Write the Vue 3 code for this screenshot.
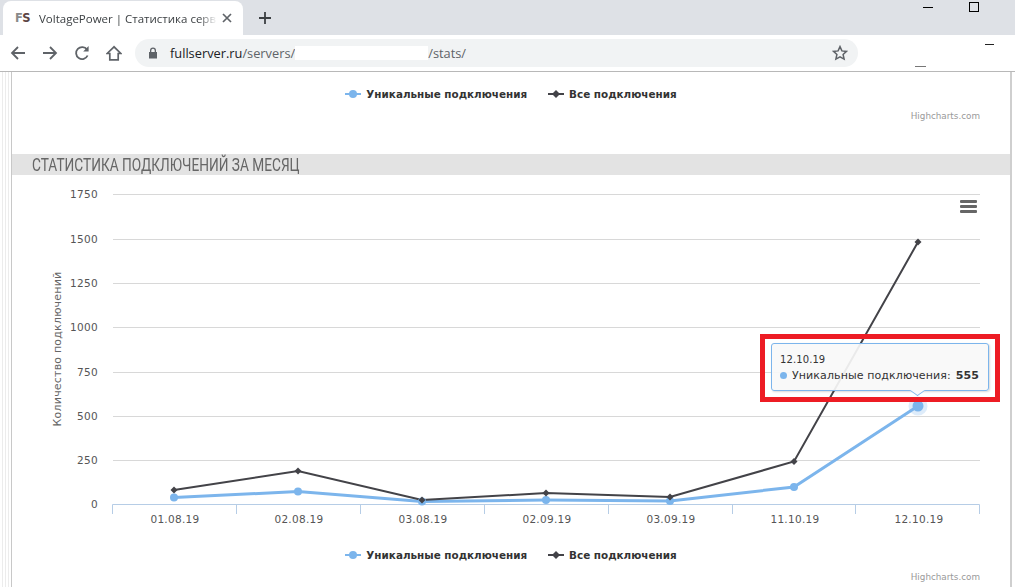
<script setup>
const gridLines = [
  { y: 19.5, label: '1750' },
  { y: 64.5, label: '1500' },
  { y: 108.5, label: '1250' },
  { y: 152.5, label: '1000' },
  { y: 197.5, label: '750' },
  { y: 241.5, label: '500' },
  { y: 285.5, label: '250' },
  { y: 329.5, label: '0' },
]

const categories = ['01.08.19', '02.08.19', '03.08.19', '02.09.19', '03.09.19', '11.10.19', '12.10.19']
const ticks = [100.5, 224.5, 348.5, 472.5, 596.5, 720.5, 843.5, 967.5]
const centers = [162, 286, 410, 534, 658, 782, 906]

const uniqueY = [322.5, 316.5, 326.5, 325, 326, 312, 231]
const allY = [315, 296, 325, 318, 322, 286.5, 67]

const toPoints = (ys) => ys.map((y, i) => `${centers[i]},${y}`).join(' ')
const diamond = (x, y) => `${x},${y - 3.5} ${x + 3.5},${y} ${x},${y + 3.5} ${x - 3.5},${y}`
</script>

<template>
  <div class="window">
    <div class="tabstrip">
      <div class="tab">
        <span class="favicon"><i>F</i>S</span>
        <span class="tab-title">VoltagePower | Статистика серв</span>
        <svg class="tab-close" width="10" height="10" viewBox="0 0 10 10">
          <path d="M1 1l8 8M9 1l-8 8" stroke="#5f6368" stroke-width="1.7" />
        </svg>
      </div>
      <svg class="new-tab" width="14" height="14" viewBox="0 0 14 14">
        <path d="M7 1v12M1 7h12" stroke="#3c4043" stroke-width="1.8" />
      </svg>
      <div class="win-controls">
        <span class="win-min"></span>
        <span class="win-max"></span>
      </div>
    </div>

    <div class="toolbar">
      <svg class="nav" width="16" height="16" viewBox="0 0 16 16">
        <path d="M15 8H2M8 2L2 8l6 6" fill="none" stroke="#5f6368" stroke-width="1.8" />
      </svg>
      <svg class="nav" width="16" height="16" viewBox="0 0 16 16">
        <path d="M1 8h13M8 2l6 6-6 6" fill="none" stroke="#5f6368" stroke-width="1.8" />
      </svg>
      <svg class="nav" width="16" height="16" viewBox="0 0 16 16">
        <path d="M13.6 10.5A6 6 0 1 1 13 4.6" fill="none" stroke="#5f6368" stroke-width="1.8" />
        <path d="M14.6 1v5.4H9.2z" fill="#5f6368" />
      </svg>
      <svg class="nav" width="16" height="16" viewBox="0 0 16 16">
        <path d="M8 1.8L1.2 8.5H3.8V14.8H12.2V8.5H14.8z" fill="none" stroke="#5f6368" stroke-width="1.7" />
      </svg>
      <div class="omnibox">
        <svg class="lock" width="10" height="12" viewBox="0 0 10 12">
          <path d="M2 5V3.5a3 3 0 0 1 6 0V5h1v6.5H1V5zm1.3 0h3.4V3.5a1.7 1.7 0 0 0-3.4 0z" fill="#5f6368" />
        </svg>
        <span class="url-host">fullserver.ru</span><span class="url-path">/servers/</span>
        <span class="url-mask"></span>
        <span class="url-path">/stats/</span>
        <svg class="star" width="16" height="16" viewBox="0 0 16 16">
          <path d="M8 1.6l1.9 4.3 4.6.5-3.4 3.1 1 4.6L8 11.8l-4.1 2.3 1-4.6L1.5 6.4l4.6-.5z" fill="none" stroke="#5f6368" stroke-width="1.5" />
        </svg>
      </div>
      <span class="glitch glitch-a"></span>
      <span class="glitch glitch-b"></span>
    </div>

    <div class="page">
      <div class="left-rail"></div>
      <main class="content">
        <section class="chart-tail">
          <div class="legend">
            <span class="legend-item">
              <svg width="16" height="10" viewBox="0 0 16 10">
                <path d="M0 5h16" stroke="#7cb5ec" stroke-width="2" />
                <circle cx="8" cy="5" r="4" fill="#7cb5ec" />
              </svg>
              Уникальные подключения
            </span>
            <span class="legend-item">
              <svg width="16" height="10" viewBox="0 0 16 10">
                <path d="M0 5h16" stroke="#434348" stroke-width="2" />
                <polygon points="8,1 12,5 8,9 4,5" fill="#434348" />
              </svg>
              Все подключения
            </span>
          </div>
          <div class="credits">Highcharts.com</div>
        </section>

        <h2 class="section-title"><span>СТАТИСТИКА ПОДКЛЮЧЕНИЙ ЗА МЕСЯЦ</span></h2>

        <section class="chart">
          <svg class="plot" width="998" height="352" viewBox="0 0 998 352">
            <g v-for="line in gridLines" :key="line.label">
              <line v-if="line.label !== '0'" x1="101" x2="968" :y1="line.y" :y2="line.y" stroke="#d8d8d8" />
              <text class="axis-label" x="86" :y="line.y + 3" text-anchor="end">{{ line.label }}</text>
            </g>

            <text class="axis-title" transform="translate(49 174) rotate(-90)" text-anchor="middle">Количество подключений</text>

            <line x1="100.5" x2="967.5" y1="329.5" y2="329.5" stroke="#b6cde6" />
            <line v-for="x in ticks" :key="x" :x1="x" :x2="x" y1="329.5" y2="339" stroke="#b6cde6" />
            <text v-for="(c, i) in categories" :key="c" class="axis-label" :x="centers[i] + 1" y="348" text-anchor="middle">{{ c }}</text>

            <polyline :points="toPoints(uniqueY)" fill="none" stroke="#7cb5ec" stroke-width="3" />
            <polyline :points="toPoints(allY)" fill="none" stroke="#434348" stroke-width="2" />

            <circle v-for="(y, i) in uniqueY" :key="'u' + i" :cx="centers[i]" :cy="y" r="4" fill="#7cb5ec" />
            <polygon v-for="(y, i) in allY" :key="'a' + i" :points="diamond(centers[i], y)" fill="#434348" />
            <circle cx="906" cy="231" r="9.5" fill="#7cb5ec" fill-opacity="0.25" />
            <circle cx="906" cy="231" r="5.5" fill="#7cb5ec" />

            <g fill="#666">
              <rect x="948" y="25" width="17" height="3" rx="1" />
              <rect x="948" y="30" width="17" height="3" rx="1" />
              <rect x="948" y="35" width="17" height="3" rx="1" />
            </g>
          </svg>

          <div class="tooltip">
            <div class="tooltip-date">12.10.19</div>
            <div class="tooltip-row">
              <span class="tooltip-dot"></span>
              <span>Уникальные подключения:</span>
              <b>555</b>
            </div>
            <span class="tooltip-arrow"></span>
          </div>
          <div class="highlight"></div>

          <div class="legend legend-bottom">
            <span class="legend-item">
              <svg width="16" height="10" viewBox="0 0 16 10">
                <path d="M0 5h16" stroke="#7cb5ec" stroke-width="2" />
                <circle cx="8" cy="5" r="4" fill="#7cb5ec" />
              </svg>
              Уникальные подключения
            </span>
            <span class="legend-item">
              <svg width="16" height="10" viewBox="0 0 16 10">
                <path d="M0 5h16" stroke="#434348" stroke-width="2" />
                <polygon points="8,1 12,5 8,9 4,5" fill="#434348" />
              </svg>
              Все подключения
            </span>
          </div>
          <div class="credits">Highcharts.com</div>
        </section>
      </main>
      <div class="right-rail"></div>
    </div>
  </div>
</template>

<style>
html, body {
  margin: 0;
  overflow: hidden;
  background: #fff;
}
</style>

<style scoped>
.window {
  width: 1015px;
  height: 587px;
  overflow: hidden;
  display: flex;
  flex-direction: column;
  font-family: "Open Sans", "Liberation Sans", sans-serif;
}

/* вкладки */
.tabstrip {
  height: 35px;
  flex: none;
  background: #dee1e6;
  display: flex;
  align-items: flex-end;
  position: relative;
}
.tab {
  width: 240px;
  height: 34px;
  margin-left: 3px;
  background: #fff;
  border-radius: 8px 8px 0 0;
  display: flex;
  align-items: center;
  box-sizing: border-box;
  padding-left: 12px;
}
.favicon {
  width: 24px;
  flex: none;
  font: bold 11.5px "DejaVu Sans", sans-serif;
  letter-spacing: -0.5px;
  color: #5c4444;
}
.favicon i {
  font-style: normal;
  color: #8a8a8a;
}
.tab-title {
  width: 178px;
  flex: none;
  white-space: nowrap;
  font-size: 11.5px;
  color: #3c4043;
  -webkit-mask-image: linear-gradient(to right, #000 90%, transparent);
  mask-image: linear-gradient(to right, #000 90%, transparent);
}
.tab-close {
  margin-left: 5px;
}
.new-tab {
  margin: 0 0 10px 15px;
}
.win-controls {
  position: absolute;
  top: 2px;
  left: 923px;
  display: flex;
  gap: 36px;
}
.win-min {
  width: 10px;
  height: 1px;
  margin-top: 5px;
  background: #000;
}
.win-max {
  width: 8px;
  height: 8px;
  border: 1px solid #000;
}

/* адресная строка */
.toolbar {
  height: 37px;
  flex: none;
  box-sizing: border-box;
  background: #fff;
  border-bottom: 1px solid #b8b8b8;
  display: flex;
  align-items: center;
  padding-left: 10px;
  gap: 16px;
  position: relative;
}
.nav {
  flex: none;
}
.omnibox {
  width: 723px;
  height: 28px;
  margin-left: -3px;
  background: #f1f3f4;
  border-radius: 14px;
  display: flex;
  align-items: center;
  box-sizing: border-box;
  padding-left: 13px;
  font-size: 12.8px;
  white-space: nowrap;
}
.lock {
  margin-right: 12px;
  flex: none;
}
.url-host {
  color: #202124;
}
.url-path {
  color: #5f6368;
}
.url-mask {
  width: 133px;
  height: 14px;
  background: #fff;
  flex: none;
}
.star {
  margin-left: auto;
  margin-right: 10px;
}
.glitch {
  position: absolute;
  height: 1px;
}
.glitch-a {
  left: 985px;
  top: 9px;
  width: 9px;
  background: #222;
}
.glitch-b {
  left: 915px;
  top: 31px;
  width: 11px;
  background: #777;
}

/* страница */
.page {
  flex: 1;
  display: flex;
  min-height: 0;
}
.left-rail {
  width: 11px;
  flex: none;
  border-right: 1px solid #c8c8c8;
  background: repeating-linear-gradient(to right, #fff 0 2px, #ececec 2px 3px);
}
.right-rail {
  flex: 1;
  border-left: 2px solid #cfcfcf;
  background: #fff;
}
.content {
  width: 998px;
  flex: none;
  display: flex;
  flex-direction: column;
}
.chart-tail {
  height: 82px;
  flex: none;
}
.legend {
  display: flex;
  justify-content: center;
  gap: 21px;
  padding-top: 15px;
  height: 14px;
  align-items: center;
  font: bold 10.4px "DejaVu Sans", sans-serif;
  color: #333;
}
.legend-item {
  display: flex;
  align-items: center;
  gap: 5px;
}
.credits {
  margin-top: 10px;
  padding-right: 30px;
  text-align: right;
  font: 8.8px "DejaVu Sans", sans-serif;
  color: #999;
}
.section-title {
  height: 21px;
  margin: 0;
  flex: none;
  background: #e3e3e3;
  padding-left: 20px;
  overflow: hidden;
  white-space: nowrap;
  font: 400 18px/21px Roboto, sans-serif;
  color: #666;
}
.section-title span {
  display: inline-block;
  transform: scaleX(0.76);
  transform-origin: left center;
}
.chart {
  position: relative;
  flex: 1;
}
.plot {
  display: block;
}
.axis-label {
  font: 10.5px "DejaVu Sans", sans-serif;
  fill: #555;
  letter-spacing: 0.3px;
}
.axis-title {
  font: 11px "DejaVu Sans", sans-serif;
  fill: #666;
  letter-spacing: 0.2px;
}
.legend-bottom {
  padding-top: 21px;
  margin-bottom: 1px;
}

/* подсказка */
.tooltip {
  position: absolute;
  left: 759px;
  top: 168px;
  width: 218px;
  height: 48px;
  box-sizing: border-box;
  background: rgba(249, 249, 249, 0.92);
  border: 1px solid #7cb5ec;
  border-radius: 3px;
  padding: 10px 0 0 8px;
  font: 11px "DejaVu Sans", sans-serif;
  color: #333;
  letter-spacing: 0.1px;
  box-shadow: 1px 1px 2px rgba(0, 0, 0, 0.15);
}
.tooltip-date {
  font-size: 10px;
  line-height: 12px;
}
.tooltip-row {
  display: flex;
  align-items: center;
  gap: 5px;
  line-height: 15px;
  margin-top: 2px;
  white-space: nowrap;
}
.tooltip-dot {
  width: 7px;
  height: 7px;
  border-radius: 50%;
  background: #7cb5ec;
}
.tooltip-row b {
  font-size: 11px;
}
.tooltip-arrow {
  position: absolute;
  left: 140px;
  bottom: -6px;
  width: 11px;
  height: 11px;
  box-sizing: border-box;
  background: #f9f9f9;
  border-right: 1px solid #7cb5ec;
  border-bottom: 1px solid #7cb5ec;
  transform: scaleY(0.7) rotate(45deg);
}
.highlight {
  position: absolute;
  left: 748px;
  top: 159px;
  width: 240px;
  height: 68px;
  box-sizing: border-box;
  border: 5px solid #ed1c24;
  pointer-events: none;
}
</style>
